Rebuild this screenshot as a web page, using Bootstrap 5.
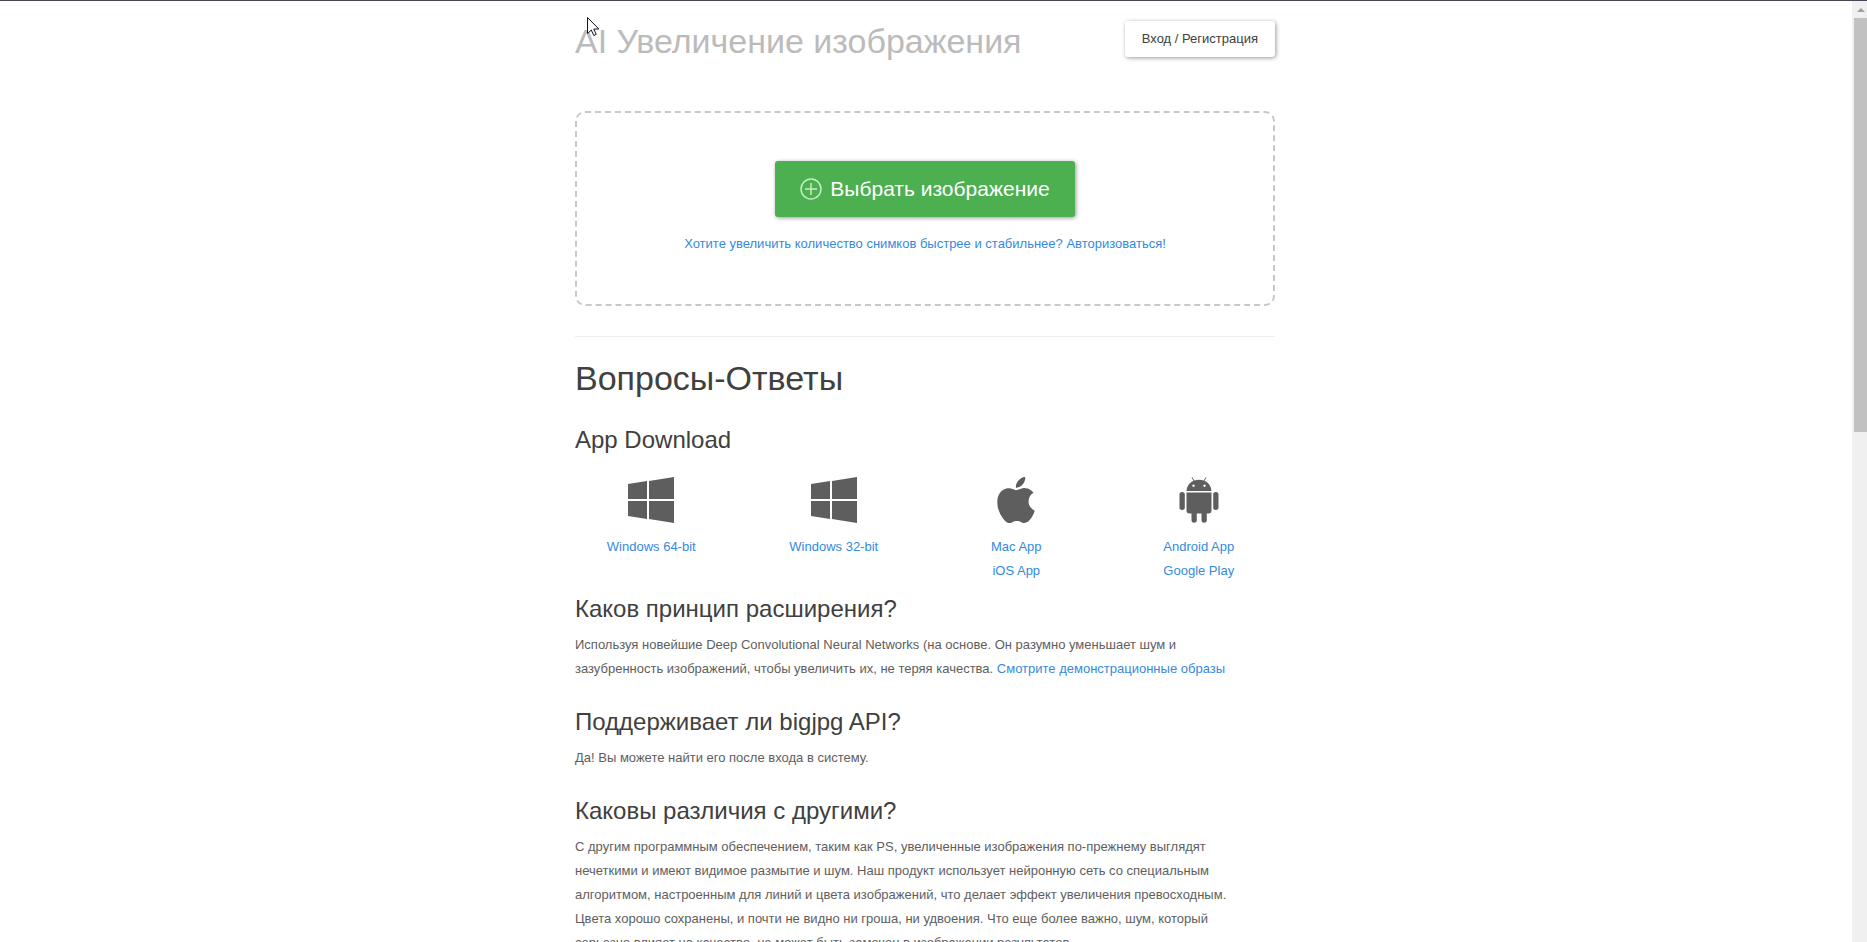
<!DOCTYPE html>
<html lang="ru">
<head>
<meta charset="utf-8">
<meta name="viewport" content="width=device-width, initial-scale=1">
<title>AI Увеличение изображения</title>
<link href="https://cdn.jsdelivr.net/npm/bootstrap@5.3.0/dist/css/bootstrap.min.css" rel="stylesheet">
<style>
  body { font-family: Arial, "Liberation Sans", sans-serif; font-size: 13px; line-height: 24px; color: #5e5e5e; background: #fff; }
  a { color: #358ae0; text-decoration: none; }
  h1, h2, h3 { color: #404040; font-weight: 400; margin: 0; }
  h1, h2 { font-size: 34px; line-height: 40px; }
  h3 { font-size: 24px; line-height: 28px; }
  .app-window { border-top: 1px solid #4a4550; }
  .page-column { max-width: 700px; }
  .site-title { color: #bbb; }
  .btn-login { --bs-btn-padding-x: 17px; --bs-btn-padding-y: 6px; --bs-btn-font-size: 13px; --bs-btn-line-height: 24px; --bs-btn-border-width: 0; --bs-btn-border-radius: 3px; --bs-btn-color: #404040; --bs-btn-bg: #fff; margin-top: 20px; box-shadow: 1px 1px 4px rgba(0,0,0,.4); }
  .drop-zone { border: 2px dashed #c8c8c8; border-radius: 10px; margin-top: 50px; padding: 48px 16px; }
  .btn-pick { --bs-btn-padding-x: 25px; --bs-btn-padding-y: 14px; --bs-btn-font-size: 21px; --bs-btn-line-height: 28px; --bs-btn-border-width: 0; --bs-btn-border-radius: 3px; --bs-btn-color: #fff; --bs-btn-bg: #4caf50; --bs-btn-hover-bg: #43a047; --bs-btn-hover-color: #fff; box-shadow: 1px 1px 4px rgba(0,0,0,.4); }
  .login-hint { margin-top: 15px; }
  .divider { border-top: 1px solid #eee; margin: 30px 0 21px; }
  .downloads-title { margin-top: 28px; }
  .downloads { --bs-gutter-x: 30px; margin-top: 23px; }
  .downloads svg { display: block; margin: 0 auto 12px; fill: #5e5e5e; }
  .faq { padding-top: 12px; }
  .faq-item { margin-bottom: 27px; }
  .faq-item p { margin: 10px 0 0; }
  .scroll-track { width: 17px; background: #f0f0f0; border-left: 2px solid #fff; }
  .scroll-track svg { display: block; margin: 0 0 0 5px; }
  .scroll-thumb { height: 44%; background: #c1c1c1; margin-left: 2px; }
  .pointer { left: 12px; top: 0; }
</style>
</head>
<body>
<div class="app-window d-flex vh-100 overflow-hidden">
  <div class="flex-grow-1 overflow-hidden">
    <div class="page-column mx-auto">
      <header class="d-flex justify-content-between align-items-start">
        <div class="position-relative pt-3">
          <h1 class="site-title pt-1">AI Увеличение изображения</h1>
          <svg class="pointer position-absolute mt-3" width="13" height="20" viewBox="0 0 13 20" aria-hidden="true"><path d="M.5.5V16.5L4.3 13 6.8 18.5 9.2 17.4 6.8 12H11.9Z" fill="#fff" stroke="#112"/></svg>
        </div>
        <button type="button" class="btn btn-login">Вход / Регистрация</button>
      </header>
      <main>
        <section class="drop-zone text-center">
          <button type="button" class="btn btn-pick d-inline-flex align-items-center gap-2">
            <svg width="22" height="22" viewBox="0 0 22 22" fill="none" stroke="#c4edc5" stroke-width="1.5" aria-hidden="true"><circle cx="11" cy="11" r="10"/><path d="M11 5v12M5 11h12"/></svg>
            Выбрать изображение
          </button>
          <div class="login-hint"><a href="#login">Хотите увеличить количество снимков быстрее и стабильнее? Авторизоваться!</a></div>
        </section>
        <div class="divider"></div>
        <h2>Вопросы-Ответы</h2>
        <h3 class="downloads-title">App Download</h3>
        <div class="row downloads text-center">
          <div class="col-3">
            <svg width="46" height="46" viewBox="0 0 46 46"><path d="M0 7L19 4V22H0ZM21 4L46 0V22H21ZM0 24H19V42L0 39ZM21 24H46V46L21 42Z"/></svg>
            <a href="#win64">Windows 64-bit</a>
          </div>
          <div class="col-3">
            <svg width="46" height="46" viewBox="0 0 46 46"><path d="M0 7L19 4V22H0ZM21 4L46 0V22H21ZM0 24H19V42L0 39ZM21 24H46V46L21 42Z"/></svg>
            <a href="#win32">Windows 32-bit</a>
          </div>
          <div class="col-3">
            <svg width="46" height="46" viewBox="0 0 16 16"><path d="M11.182.008C11.148-.03 9.923.023 8.857 1.18c-1.066 1.156-.902 2.482-.878 2.516s1.52.087 2.475-1.258.762-2.391.728-2.43m3.314 11.733c-.048-.096-2.325-1.234-2.113-3.422s1.675-2.789 1.698-2.854-.597-.79-1.254-1.157a3.7 3.7 0 0 0-1.563-.434c-.108-.003-.483-.095-1.254.116-.508.139-1.653.589-1.968.607-.316.018-1.256-.522-2.267-.665-.647-.125-1.333.131-1.824.328-.49.196-1.422.754-2.074 2.237-.652 1.482-.311 3.83-.067 4.56s.625 1.924 1.273 2.796c.576.984 1.34 1.667 1.659 1.899s1.219.386 1.843.067c.502-.308 1.408-.485 1.766-.472.357.013 1.061.154 1.782.539.571.197 1.111.115 1.652-.105.541-.221 1.324-1.059 2.238-2.758q.52-1.185.473-1.282"/></svg>
            <a href="#mac">Mac App</a><br><a href="#ios">iOS App</a>
          </div>
          <div class="col-3">
            <svg width="46" height="46" viewBox="0 0 46 46"><path d="M10.500 14C11 8.500 14 5.500 17.500 3.800L15.500.6 16.200.2 18.400 3.400C21 2.400 25 2.400 27.600 3.400L29.800.2 30.500.6 28.500 3.800C32 5.500 35 8.500 35.500 14ZM17.500 7.500a1.200 1.200 0 1 0 .01 0ZM28.500 7.500a1.200 1.200 0 1 0 .01 0Z" fill-rule="evenodd"/><path d="M10.500 15.500h25V33.500a3 3 0 0 1-3 3H30.800V43a2.600 2.600 0 0 1-5.300 0V36.500H20.800V43a2.600 2.600 0 0 1-5.300 0V36.500H13.500a3 3 0 0 1-3-3Z"/><rect x="3.500" y="15" width="5.300" height="18" rx="2.600"/><rect x="37.200" y="15" width="5.300" height="18" rx="2.600"/></svg>
            <a href="#android">Android App</a><br><a href="#play">Google Play</a>
          </div>
        </div>
        <div class="faq">
          <section class="faq-item">
            <h3>Каков принцип расширения?</h3>
            <p>Используя новейшие Deep Convolutional Neural Networks (на основе. Он разумно уменьшает шум и<br>зазубренность изображений, чтобы увеличить их, не теряя качества. <a href="#demo">Смотрите демонстрационные образы</a></p>
          </section>
          <section class="faq-item">
            <h3>Поддерживает ли bigjpg API?</h3>
            <p>Да! Вы можете найти его после входа в систему.</p>
          </section>
          <section class="faq-item">
            <h3>Каковы различия с другими?</h3>
            <p>С другим программным обеспечением, таким как PS, увеличенные изображения по-прежнему выглядят<br>нечеткими и имеют видимое размытие и шум. Наш продукт использует нейронную сеть со специальным<br>алгоритмом, настроенным для линий и цвета изображений, что делает эффект увеличения превосходным.<br>Цвета хорошо сохранены, и почти не видно ни гроша, ни удвоения. Что еще более важно, шум, который<br>серьезно влияет на качество, не может быть замечен в изображении результатов.</p>
          </section>
        </div>
      </main>
    </div>
  </div>
  <div class="scroll-track flex-shrink-0" aria-hidden="true">
    <svg width="8" height="17" viewBox="0 0 8 17"><path d="M0 11L4 7 8 11Z" fill="#a0a0a0"/></svg>
    <div class="scroll-thumb"></div>
  </div>
</div>
<script src="https://cdn.jsdelivr.net/npm/bootstrap@5.3.0/dist/js/bootstrap.bundle.min.js"></script>
</body>
</html>
